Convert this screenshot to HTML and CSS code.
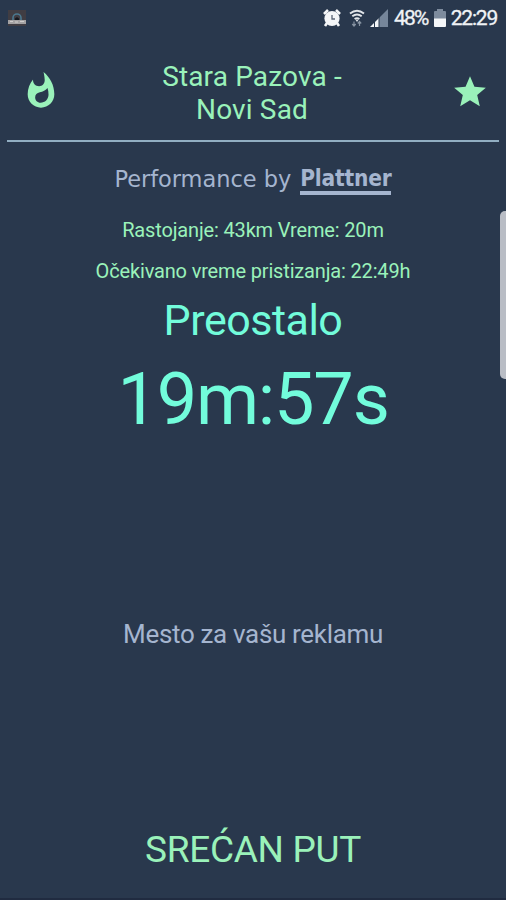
FILE: index.html
```html
<!DOCTYPE html>
<html lang="sr">
<head>
    <meta charset="UTF-8">
    <title>Stara Pazova - Novi Sad</title>
    <link rel="stylesheet" href="styles.css">
</head>
<body>
    <div class="screen">
        <div class="status-bar">
            <svg class="app-icon" width="18" height="16" viewBox="0 0 18 16">
                <rect width="18" height="16" fill="#403d43"/>
                <path d="M5 10V8a4 4 0 0 1 8 0v2" fill="none" stroke="#4b788f" stroke-width="1.6"/>
                <path d="M7 10V8.500l2-1.500 2 1.500V10z" fill="#15191f"/>
                <rect y="10" width="18" height="4" fill="#a4a2a3"/>
                <path d="M2 11.500h3M7 12h3M12 11.500h4" stroke="#d0cecd"/>
            </svg>
            <div class="status-right">
                <svg class="alarm" width="18" height="18" viewBox="0 0 18 18">
                    <path d="M1 5l4-4M17 5l-4-4M4 14l-2 3M14 14l2 3" stroke="#f4f6f8" stroke-width="2.600"/>
                    <circle cx="9" cy="9.500" r="7.600" fill="#f4f6f8"/>
                    <path d="M9 6v4h3" fill="none" stroke="#5b6575" stroke-width="1.300"/>
                </svg>
                <svg class="wifi" width="16" height="18" viewBox="0 0 16 18">
                    <path d="M1 4.500q7-5.500 14 0M3.300 7.300q4.700-3.600 9.400 0M5.600 10q2.400-1.800 4.800 0" fill="none" stroke="#e2e6ea" stroke-width="1.900"/>
                    <path d="M8 13L6.300 10.500h3.400z" fill="#e2e6ea"/>
                    <path d="M5 12.500v4.500M3.300 15L5 17l1.700-2M10.500 17v-4.500M8.800 14.500l1.700-2 1.700 2" fill="none" stroke="#8793a2" stroke-width="1.200"/>
                </svg>
                <svg class="signal" width="18" height="18" viewBox="0 0 18 18">
                    <path d="M0 18L9 9v9z" fill="#f4f6f8"/>
                    <path d="M9 9l9-9v18H9z" fill="#76869a"/>
                    <path d="M4.500 12v6M9 7v11" stroke="#29384d"/>
                </svg>
                <span class="percent">48%</span>
                <svg class="battery" width="12" height="18" viewBox="0 0 12 18">
                    <path d="M3 0h6v2h2q1 0 1 1v7H0V3q0-1 1-1h2z" fill="#7d8b9d"/>
                    <path d="M0 9.500h12V17q0 1-1 1H1q-1 0-1-1z" fill="#f4f6f8"/>
                </svg>
                <span class="clock">22:29</span>
            </div>
        </div>

        <div class="header">
            <svg class="flame" width="40" height="40" viewBox="0 0 24 24">
                <path d="M13.500.67s.74 2.650.74 4.800c0 2.060-1.350 3.730-3.410 3.730-2.070 0-3.630-1.670-3.630-3.730l.03-.36C5.210 7.510 4 10.620 4 14c0 4.420 3.580 8 8 8s8-3.580 8-8C20 8.610 17.410 3.800 13.500.67zM11.710 19c-1.780 0-3.220-1.400-3.220-3.140 0-1.620 1.050-2.760 2.810-3.120 1.770-.36 3.600-1.210 4.620-2.580.39 1.290.59 2.650.59 4.040 0 2.650-2.150 4.800-4.800 4.800z"/>
            </svg>
            <h1>Stara Pazova -<br>Novi Sad</h1>
            <svg class="star" width="38" height="38" viewBox="0 0 24 24">
                <path d="M12 17.270L18.180 21l-1.640-7.030L22 9.240l-7.190-.61L12 2 9.190 8.630 2 9.240l5.460 4.730L5.820 21z"/>
            </svg>
        </div>

        <div class="sponsor">
            <span class="sponsor-text">Performance by</span>
            <span class="sponsor-name">Plattner</span>
        </div>

        <div class="info">Rastojanje: 43km Vreme: 20m</div>
        <div class="info">Očekivano vreme pristizanja: 22:49h</div>
        <h2>Preostalo</h2>
        <div class="timer">19m:57s</div>

        <div class="ad">Mesto za vašu reklamu</div>
        <div class="footer">SREĆAN PUT</div>

        <div class="edge-handle"></div>
    </div>
</body>
</html>
```

FILE: styles.css
```css
body {
    margin: 0;
    background-color: #29384d;
    font-family: Roboto, "Liberation Sans", sans-serif;
    color: #9af2ba;
}

.screen {
    position: relative;
    height: 900px;
    box-sizing: border-box;
    overflow: hidden;
    text-align: center;
    display: flex;
    flex-direction: column;
    border-bottom: 2px solid #202b40;
}

.status-bar {
    height: 36px;
    flex: none;
    padding: 0 9px 0 8px;
    display: flex;
    align-items: center;
    justify-content: space-between;
    color: #f0f3f6;
    font-size: 21px;
}

.status-right {
    display: flex;
    align-items: center;
}

.wifi {
    margin-left: 8px;
}

.signal {
    margin-left: 5px;
}

.percent {
    margin-left: 6px;
    letter-spacing: -1.8px;
}

.battery {
    margin: 0 5px 0 6px;
}

.clock {
    letter-spacing: -1.2px;
}

.percent,
.clock {
    -webkit-text-stroke: 0.3px #f0f3f6;
}

.header {
    height: 106px;
    flex: none;
    box-sizing: border-box;
    margin: 0 7px;
    padding: 8px 10px 0 14px;
    border-bottom: 2px solid #91aec2;
    display: flex;
    align-items: center;
    justify-content: space-between;
}

.header svg {
    fill: #9af2ba;
}

.flame {
    margin-bottom: 2px;
}

h1 {
    margin: 2px 8px 0 0;
    font-size: 28px;
    font-weight: 400;
    line-height: 33px;
    letter-spacing: 0.15px;
}

.sponsor {
    height: 53px;
    margin-top: 23px;
    flex: none;
    display: flex;
    justify-content: center;
    align-items: flex-start;
    gap: 9px;
    color: #a5b5cf;
    font-family: "DejaVu Sans", sans-serif;
    font-size: 22.5px;
    line-height: 28px;
}

.sponsor-text {
    letter-spacing: -0.05px;
}

.sponsor-name {
    font-family: "DejaVu Sans Condensed", "DejaVu Sans", sans-serif;
    font-stretch: condensed;
    font-weight: 700;
    line-height: 26px;
    border-bottom: 4px solid #a5b5cf;
    letter-spacing: -0.2px;
}

.info {
    flex: none;
    height: 41px;
    font-size: 20px;
    line-height: 24px;
    letter-spacing: -0.16px;
}

h2 {
    flex: none;
    margin: -5px 0 0;
    font-size: 43px;
    font-weight: 400;
    line-height: 50px;
    letter-spacing: -0.5px;
    color: #72fcdb;
}

.timer {
    flex: none;
    margin-top: 13px;
    font-size: 72px;
    line-height: 84px;
    letter-spacing: -1.2px;
    color: #72fcdb;
}

.ad {
    flex: none;
    margin-top: 177px;
    font-size: 26px;
    line-height: 30px;
    letter-spacing: -0.33px;
    color: #a5b5cf;
}

.footer {
    flex: none;
    margin-top: 179px;
    font-size: 37px;
    line-height: 44px;
    letter-spacing: -0.3px;
}

.edge-handle {
    position: absolute;
    right: -6px;
    top: 211px;
    width: 12px;
    height: 168px;
    border-radius: 5px;
    background-color: #b9bdc5;
}
```
